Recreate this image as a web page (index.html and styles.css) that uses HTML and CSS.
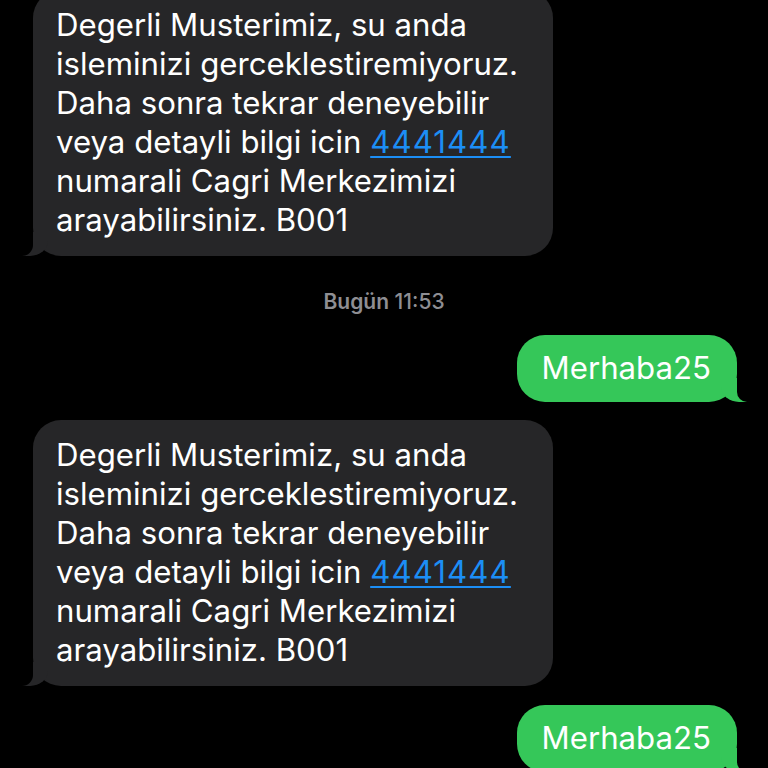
FILE: index.html
```html
<!DOCTYPE html>
<html lang="tr">
<head>
<meta charset="utf-8">
<title>Mesajlar</title>
<link rel="stylesheet" href="styles.css">
</head>
<body>
<div class="thread">
  <div class="bubble in first">Degerli Musterimiz, su anda<br>isleminizi gerceklestiremiyoruz.<br>Daha sonra tekrar deneyebilir<br>veya detayli bilgi icin <a class="link" href="#">4441444</a><br>numarali Cagri Merkezimizi<br>arayabilirsiniz. B001</div>
  <div class="stamp"><span class="day">Bugün</span> 11:53</div>
  <div class="bubble out">Merhaba25</div>
  <div class="bubble in">Degerli Musterimiz, su anda<br>isleminizi gerceklestiremiyoruz.<br>Daha sonra tekrar deneyebilir<br>veya detayli bilgi icin <a class="link" href="#">4441444</a><br>numarali Cagri Merkezimizi<br>arayabilirsiniz. B001</div>
  <div class="bubble out last">Merhaba25</div>
</div>
</body>
</html>
```
FILE: styles.css
```css
html, body {
  margin: 0;
  padding: 0;
  background: #000;
  height: 768px;
  overflow: hidden;
}

.thread {
  display: flex;
  flex-direction: column;
  font-family: Inter, "Liberation Sans", sans-serif;
  color: #fff;
}

.bubble {
  position: relative;
  box-sizing: border-box;
  border-radius: 28px;
  font-size: 31.2px;
  line-height: 39px;
  white-space: nowrap;
}

.in {
  align-self: flex-start;
  width: 520px;
  margin-left: 33px;
  margin-top: 18px;
  padding: 16px 20px 16px 23px;
  background: #262628;
}

.in.first {
  margin-top: -10px;
}

.out {
  align-self: flex-end;
  margin-right: 31px;
  margin-top: 21px;
  padding: 14px 26px 14px 25px;
  background: #35c759;
}

.out.last {
  margin-top: 19px;
}

.in::before,
.in::after,
.out::before,
.out::after {
  content: "";
  position: absolute;
  bottom: 0;
  height: 24px;
}

.in::before {
  left: -11px;
  width: 26px;
  background: #262628;
  border-bottom-right-radius: 18px 15px;
}

.in::after {
  left: -30px;
  width: 30px;
  background: #000;
  border-bottom-right-radius: 11px;
}

.out::before {
  right: -10px;
  width: 26px;
  background: #35c759;
  border-bottom-left-radius: 18px 15px;
}

.out::after {
  right: -30px;
  width: 30px;
  background: #000;
  border-bottom-left-radius: 10px;
}

.link {
  color: #1c8ef5;
  letter-spacing: 1.1px;
  text-decoration: underline;
  text-decoration-thickness: 2px;
  text-underline-offset: 3px;
}

.stamp {
  align-self: center;
  margin-top: 34px;
  font-size: 21px;
  line-height: 24px;
  color: #8e8e93;
  font-weight: 500;
}

.day {
  font-weight: 600;
}
```
